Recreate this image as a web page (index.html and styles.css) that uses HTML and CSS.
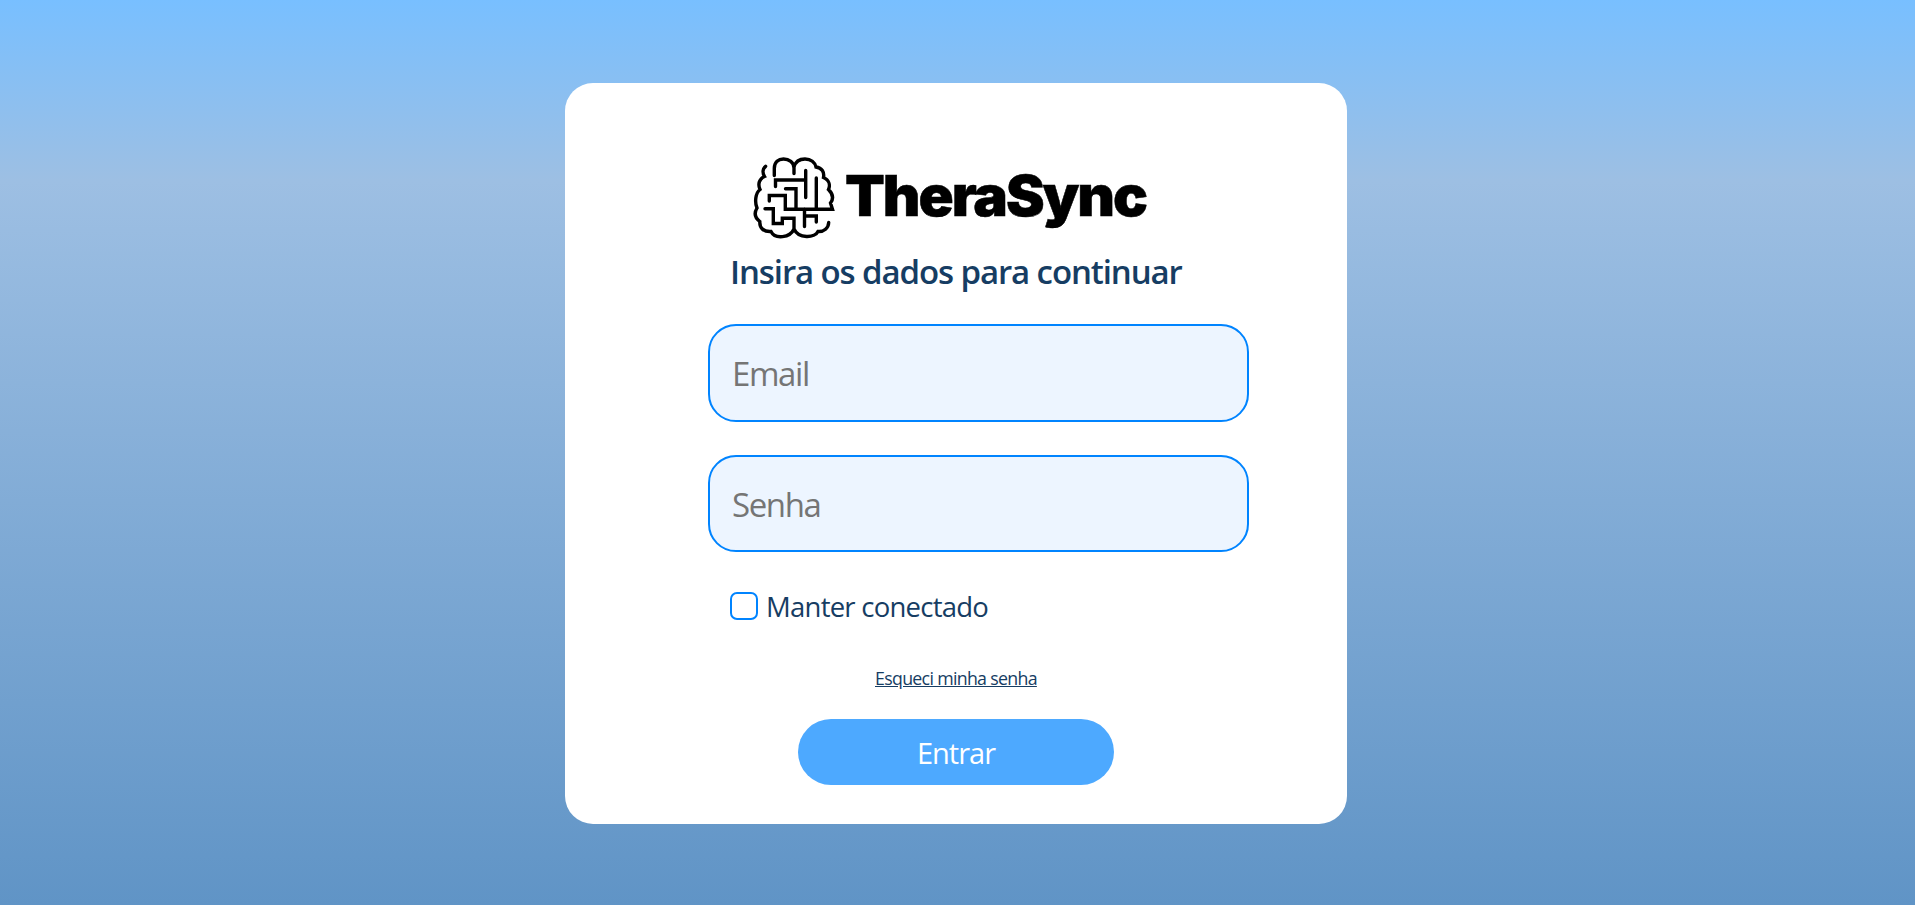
FILE: index.html
```html
<!DOCTYPE html>
<html lang="pt-BR">
<head>
<meta charset="utf-8">
<title>TheraSync</title>
<link rel="stylesheet" href="styles.css">
</head>
<body>
<main class="card">
  <svg class="logo" viewBox="0 0 410 100" role="img" aria-label="TheraSync">
    <g class="brain">
      <path d="M29.3 30.5V23.5C29.3 17 33.5 14 38.5 14C44 14 49 17.5 49 23V28.500M49 22C50.500 16.500 55 14 60 14C66 14 70 17.500 71 22C77 23 79.500 27 78.500 32.500C84 35 85.500 40 83.500 44.500C88.500 49.500 88.500 54 85.500 58L87.500 64.300H40.300V50.500H24.300V56M83.700 77.500C83.500 83 79 87 73 86.500C70 93 53.500 94 49 84V73.300H37.300V78.500H28.300V63.800H20M49 84C45 93 30 94.500 26 86.500C18.500 87 14.500 83 14.800 76.500C9.500 72.500 9 68 12 63C9.500 57 10.500 48 15 44.500C12.500 39 14.500 33.500 19.500 31.500C17.200 27.500 17.800 23.500 20.600 21.300M30.500 41.500V35H60.700M60.700 25.500V52.500M40.500 43.800H51V64M71.300 33V64M59.500 64V81.500M59.500 71H71.300V77"/>
    </g>
    <text class="wordmark" x="100" y="70.5" textLength="301" lengthAdjust="spacingAndGlyphs">TheraSync</text>
  </svg>
  <h1 class="title">Insira os dados para continuar</h1>
  <form class="form">
    <input class="field email" type="text" placeholder="Email">
    <input class="field senha" type="password" placeholder="Senha">
    <label class="keep"><input class="check" type="checkbox"><span>Manter conectado</span></label>
    <a class="forgot" href="#">Esqueci minha senha</a>
    <button class="enter" type="button">Entrar</button>
  </form>
</main>
</body>
</html>
```
FILE: styles.css
```css
* { box-sizing: border-box; }
body {
  margin: 0;
  height: 905px;
  padding: 83px 0 0 565px;
  overflow: hidden;
  font-family: "Segoe UI", "Open Sans", sans-serif;
  color: #163d63;
  background: linear-gradient(180deg, #78bfff 0%, #9dbfe3 20%, #6094c6 100%);
}
.card {
  width: 782px;
  height: 741px;
  padding: 62px 0 0 143px;
  border-radius: 28px;
  background: #fff;
}
.logo { display: block; width: 410px; height: 100px; margin-left: 37px; overflow: visible; }
.brain { fill: none; stroke: #000; stroke-width: 3.4; stroke-linecap: round; stroke-linejoin: miter; }
.wordmark {
  font-family: Inter, sans-serif;
  font-weight: 900;
  font-size: 56px;
  letter-spacing: -2px;
  stroke: #000;
  stroke-width: 0.5;
}
.title {
  margin: 3px 0 0 22px;
  font-size: 33px;
  font-weight: 600;
  line-height: 48px;
  letter-spacing: -1.1px;
  white-space: nowrap;
}
.form { display: flex; flex-direction: column; align-items: flex-start; margin-top: 28px; }
.field {
  width: 541px;
  height: 98px;
  padding: 0 22px;
  border: 2px solid #0084ff;
  border-radius: 28px;
  background: #edf5ff;
  font: 33px "Segoe UI", "Open Sans", sans-serif;
  letter-spacing: -1.4px;
}
.field::placeholder { color: #757575; }
.senha { height: 97px; margin-top: 33px; padding-top: 2px; }
.keep { display: flex; align-items: center; gap: 8px; height: 40px; margin: 34px 0 0 22px; font-size: 27.5px; letter-spacing: -0.75px; }
.check { appearance: none; width: 28px; height: 28px; margin: 0; border: 2px solid #0084ff; border-radius: 7px; background: #fff; }
.forgot { margin: 39px 0 0 167px; font-size: 17.8px; line-height: 26px; letter-spacing: -0.7px; color: #163d63; }
.enter {
  width: 316px;
  height: 66px;
  margin: 28px 0 0 90px;
  padding: 1px 0 0;
  border: 0;
  border-radius: 33px;
  background: #4da9ff;
  color: #fff;
  font: 29px "Segoe UI", "Open Sans", sans-serif;
  letter-spacing: -1px;
}
```
